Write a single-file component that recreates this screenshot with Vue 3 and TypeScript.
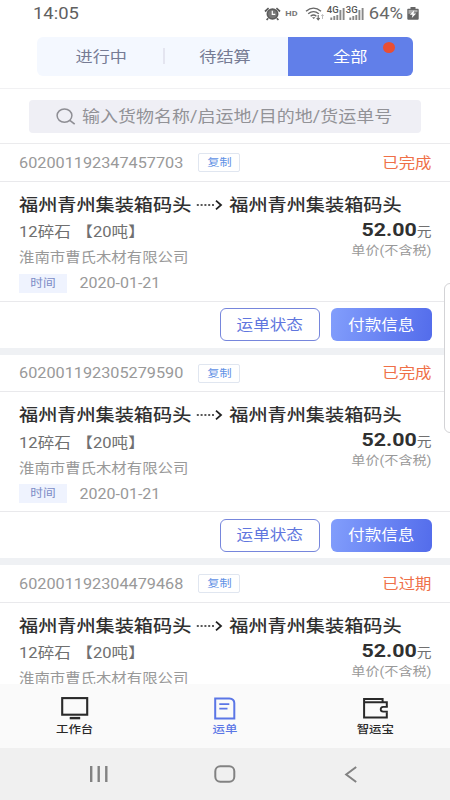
<script setup lang="ts">
interface Waybill {
  no: string
  status: string
}

const place = '福州青州集装箱码头'
const waybills: Waybill[] = [
  { no: '602001192347457703', status: '已完成' },
  { no: '602001192305279590', status: '已完成' },
  { no: '602001192304479468', status: '已过期' },
]
</script>

<template>
  <div class="screen">
    <header class="status">
      <span class="t clock">14:05</span>
      <div class="signals">
        <svg class="alarm" width="17" height="14" viewBox="0 0 17 14">
          <path d="M1 4.5 4.6 1.2M16 4.5 12.4 1.2M4.2 11.2 2.6 13M12.8 11.2l1.6 1.8" stroke="#5c5c5c" stroke-width="1.7" fill="none" />
          <ellipse cx="8.5" cy="7" rx="5.2" ry="4.9" fill="#777" stroke="#5c5c5c" stroke-width="1.6" />
          <path d="M8.3 3.8v3.6h3" stroke="#fff" stroke-width="1.2" fill="none" />
        </svg>
        <span class="t hd">HD</span>
        <svg class="wifi" width="20" height="14" viewBox="0 0 20 14">
          <g fill="none" stroke="#666" stroke-width="1.4">
            <path d="M1 4.2Q8.5-2 16 4.2" />
            <path d="M3.2 6.8Q8.5 2.5 13.8 6.8" />
            <path d="M5.6 9.2Q8.5 6.9 11.4 9.2" />
          </g>
          <path d="M7 10.2h3.4L8.7 12z" fill="#666" />
          <path d="M13.2 8v4.6M11.7 11l1.5 1.8 1.5-1.8" stroke="#666" stroke-width="1.1" fill="none" />
          <path d="M17.5 12V7.6M16.3 9l1.2-1.4L18.7 9" stroke="#bbb" fill="none" />
        </svg>
        <div v-for="net in ['4G', '3G']" :key="net" class="cell">
          <span class="t">{{ net }}</span>
          <svg width="16" height="12" viewBox="0 0 16 12">
            <path d="M1.3 9.5V12M4.3 8v4M7.3 7v5M10.4 2v10M13.6 0v12" stroke="#888" stroke-width="1.9" />
          </svg>
        </div>
        <span class="t percent">64%</span>
        <svg class="battery" width="12" height="13" viewBox="0 0 12 13">
          <path d="M3.5 0h5v1.7H11q.7 0 .7.8v9.3q0 1-1 1H1.3q-1 0-1-1V2.5q0-.8.7-.8h2.5z" fill="#666" />
          <path d="M1.5 3h9v2l-9 2z" fill="#aaa" />
          <path d="M7.2 3.2 2.8 7.8h2.7l-.7 3.3 4.4-4.7H6.5z" fill="#fff" />
        </svg>
      </div>
    </header>

    <div class="tabbar">
      <div class="tabs">
        <div class="tab"><span class="t">进行中</span></div>
        <div class="tab divided"><span class="t">待结算</span></div>
        <div class="tab active"><span class="t">全部</span><i class="dot"></i></div>
      </div>
    </div>

    <div class="searchbar">
      <div class="search">
        <svg width="20" height="17" viewBox="0 0 20 17">
          <ellipse cx="8.5" cy="7.6" rx="7.4" ry="6.7" fill="none" stroke="#8e8e94" stroke-width="1.5" />
          <path d="M13.8 12.3 18.7 16.2" stroke="#8e8e94" stroke-width="1.6" />
        </svg>
        <span class="t">输入货物名称/启运地/目的地/货运单号</span>
      </div>
    </div>

    <main class="list">
      <article v-for="bill in waybills" :key="bill.no" class="card">
        <div class="head">
          <span class="t no">{{ bill.no }}</span>
          <span class="copy"><span class="t">复制</span></span>
          <span class="t state">{{ bill.status }}</span>
        </div>
        <div class="body">
          <div class="route">
            <span class="t">{{ place }}</span>
            <svg width="27" height="12" viewBox="0 0 27 12">
              <path d="M.8 6H19" stroke="#222" stroke-width="1.5" stroke-dasharray="2 1.8" />
              <path d="M20 1.6 25 6 20 10.4" stroke="#222" stroke-width="1.8" fill="none" />
            </svg>
            <span class="t">{{ place }}</span>
          </div>
          <div class="detail">
            <div class="info">
              <div class="goods"><span class="t">12碎石</span><span class="t">【20吨】</span></div>
              <div class="company"><span class="t">淮南市曹氏木材有限公司</span></div>
              <div class="time">
                <span class="tag"><span class="t">时间</span></span>
                <span class="t">2020-01-21</span>
              </div>
            </div>
            <div class="cost">
              <div class="price"><span class="t"><b>52.00</b>元</span></div>
              <div class="unit"><span class="t">单价(不含税)</span></div>
            </div>
          </div>
        </div>
        <div class="actions">
          <button class="btn outline"><span class="t">运单状态</span></button>
          <button class="btn solid"><span class="t">付款信息</span></button>
        </div>
      </article>
    </main>

    <div class="edge-panel"></div>

    <nav class="nav">
      <div class="item">
        <svg width="28" height="23" viewBox="0 0 28 23">
          <rect x="1.2" y="1.1" width="25" height="16.6" fill="none" stroke="#292929" stroke-width="2.1" />
          <path d="M8.7 21.1h10.5" stroke="#292929" stroke-width="2.4" />
        </svg>
        <span class="t">工作台</span>
      </div>
      <div class="item current">
        <svg width="22" height="23" viewBox="0 0 22 23">
          <path d="M1.2 1.4H15.3Q20.3 1.8 20.3 6V21.5H1.2z" fill="none" stroke="#5b76e6" stroke-width="2" />
          <path d="M5.3 7.2h10M5.3 11.7h8.2" stroke="#5b76e6" stroke-width="1.7" />
        </svg>
        <span class="t">运单</span>
      </div>
      <div class="item">
        <svg width="27" height="23" viewBox="0 0 27 23">
          <path d="M24.8 9.4V5.3H2.1V2H20.6V5M2.1 4V20.6H24.8V15.2" fill="none" stroke="#292929" stroke-width="2" />
          <path d="M25.8 9.8H21.2Q18.7 9.9 18.7 12.2T21.2 14.6H25.8" fill="none" stroke="#292929" stroke-width="1.8" />
        </svg>
        <span class="t">智运宝</span>
      </div>
    </nav>

    <footer class="system">
      <svg width="20" height="16" viewBox="0 0 20 16">
        <path d="M2.2 0v16M9.7 0v16M17.3 0v16" stroke="#828282" stroke-width="2.4" />
      </svg>
      <svg width="22" height="18" viewBox="0 0 22 18">
        <rect x="1.3" y="1.2" width="19" height="15.5" rx="5" fill="none" stroke="#828282" stroke-width="2" />
      </svg>
      <svg width="14" height="17" viewBox="0 0 14 17">
        <path d="M12.2 1 2.2 8.5l10 7.5" fill="none" stroke="#828282" stroke-width="2" />
      </svg>
    </footer>
  </div>
</template>

<style>
body {
  margin: 0;
  background: #fff;
}
</style>

<style scoped>
.screen {
  position: relative;
  display: flex;
  flex-direction: column;
  width: 450px;
  height: 800px;
  overflow: hidden;
  background: #fff;
  color: #666;
  font-family: Roboto, "Noto Sans CJK SC", sans-serif;
}
.screen * {
  box-sizing: border-box;
}
svg {
  display: block;
  flex: none;
}
/* Slightly flattened lettering used by every label */
.t {
  display: inline-block;
  transform: scaleY(0.87);
  white-space: nowrap;
  line-height: 1;
}
.status {
  display: flex;
  flex: none;
  justify-content: space-between;
  height: 28px;
  padding: 0 31px 0 33px;
}
.clock {
  line-height: 28px;
  font-size: 18.4px;
  color: #606060;
}
.signals {
  display: flex;
  align-items: center;
  height: 27px;
}
.alarm {
  margin-right: 4px;
}
.hd {
  width: 14px;
  font-size: 9px;
  font-weight: 700;
  color: #777;
}
.wifi {
  margin: 0 1.5px 0 6px;
}
.cell {
  position: relative;
  display: flex;
  align-items: flex-end;
  width: 19px;
  height: 13px;
  padding-left: 3px;
}
.cell .t {
  position: absolute;
  left: 0;
  top: -2px;
  z-index: 1;
  font-size: 9.5px;
  font-weight: 500;
  color: #555;
  text-shadow: 0 0 1px #fff, 0 0 1px #fff;
}
.percent {
  margin-left: 4px;
  padding-top: 2px;
  font-size: 18.4px;
  color: #686868;
}
.battery {
  margin-left: 4px;
}
.tabbar {
  flex: none;
  height: 60.5px;
  padding: 9px 37px 0;
  border-bottom: 1.5px solid #f1f1f3;
}
.tabs {
  display: grid;
  grid-template-columns: 125.5px 125px 125.5px;
  height: 39px;
  border-radius: 6px;
  background: #f4f8ff;
  overflow: hidden;
}
.tab {
  position: relative;
  display: flex;
  align-items: center;
  justify-content: center;
  padding-top: 2px;
  font-size: 17.2px;
  color: #767b94;
}
.tab:first-child {
  padding-left: 3px;
}
.divided::before {
  content: "";
  position: absolute;
  left: 0;
  top: 11px;
  width: 2px;
  height: 16px;
  background: #e4e5f0;
}
.active {
  background: #617fe9;
  color: #fff;
}
.dot {
  position: absolute;
  right: 18px;
  top: 5px;
  width: 12px;
  height: 11px;
  border-radius: 50%;
  background: #e94e34;
}
.searchbar {
  flex: none;
  height: 55.5px;
  padding: 11px 29px 0;
  border-bottom: 1.5px solid #ebebed;
}
.search {
  display: flex;
  align-items: center;
  gap: 6px;
  height: 33px;
  padding-left: 27px;
  border-radius: 4px;
  background: #efeff5;
  font-size: 18px;
  color: #929297;
}
.search .t {
  padding-top: 2px;
}
.list {
  flex: 1;
  min-height: 0;
  overflow: hidden;
}
.card {
  height: 210.5px;
  border-bottom: 7px solid #eff1f4;
}
.head {
  display: flex;
  align-items: center;
  height: 37.5px;
  padding: 1px 18.5px 0 19px;
  border-bottom: 1.5px solid #e9e9ec;
}
.no {
  padding-top: 2px;
  font-size: 16.25px;
  color: #999;
}
.copy {
  display: flex;
  align-items: center;
  justify-content: center;
  width: 42px;
  height: 19px;
  margin-left: 15px;
  padding-top: 1px;
  border: 1px solid #e0e6f0;
  border-radius: 2px;
  font-size: 12.2px;
  color: #5f91e5;
}
.state {
  margin-left: auto;
  padding-top: 2px;
  font-size: 16.4px;
  color: #ef7048;
}
.body {
  height: 120px;
  padding: 12px 18.5px 0 19px;
  border-bottom: 1.5px solid #e9e9ec;
}
.route {
  display: flex;
  align-items: center;
  height: 24px;
  font-size: 19.15px;
  font-weight: 500;
  color: #303030;
}
.route svg {
  margin: 0 6px 0 5px;
  transform: translateY(-1px);
}
.detail {
  display: flex;
  justify-content: space-between;
}
.goods,
.company,
.time,
.price,
.unit {
  display: flex;
  align-items: center;
}
.goods {
  gap: 5.5px;
  height: 32px;
  font-size: 16.6px;
  color: #707070;
}
.company {
  height: 19px;
  font-size: 15.4px;
  color: #999;
}
.time {
  gap: 12.5px;
  height: 29px;
  font-size: 16px;
  color: #999;
}
.time > .t {
  padding-top: 2px;
}
.tag {
  display: flex;
  align-items: center;
  justify-content: center;
  width: 48px;
  height: 19px;
  background: #eff3fe;
  font-size: 12.7px;
  color: #7c8cc6;
}
.cost {
  display: flex;
  flex-direction: column;
  align-items: flex-end;
}
.price {
  height: 24px;
  font-size: 14.8px;
  color: #707070;
}
.price b {
  font-size: 21.4px;
  color: #303030;
}
.unit {
  height: 19px;
  font-size: 14.1px;
  color: #999;
}
.actions {
  display: flex;
  align-items: center;
  justify-content: flex-end;
  gap: 11px;
  height: 46px;
  padding-right: 18.5px;
}
.btn {
  display: flex;
  align-items: center;
  justify-content: center;
  width: 100.5px;
  height: 33px;
  padding: 3px 0 0;
  border: 0;
  border-radius: 6px;
  font-family: inherit;
  font-size: 16.6px;
}
.outline {
  border: 1.5px solid #7686dc;
  background: #fff;
  color: #6076de;
}
.solid {
  background: linear-gradient(100deg, #829efc, #536ceb);
  color: #fff;
}
.edge-panel {
  position: absolute;
  right: -8px;
  top: 283px;
  width: 14px;
  height: 150px;
  border: 1.5px solid #d3d3d6;
  border-radius: 6px;
  background: #fff;
}
.nav {
  display: flex;
  flex: none;
  height: 64px;
  background: #fafafa;
}
.item {
  flex: 1;
  display: flex;
  flex-direction: column;
  align-items: center;
  padding-top: 13px;
  font-size: 12.4px;
  font-weight: 500;
  color: #292929;
}
.item svg {
  height: 23px;
}
.item:last-child {
  padding-left: 1px;
}
.item .t {
  margin-top: 3px;
}
.item.current {
  padding-left: 1px;
  color: #5b76e6;
}
.system {
  display: grid;
  grid-template-columns: 198px 54px 198px;
  align-items: center;
  justify-items: center;
  flex: none;
  height: 52px;
  background: #f0f0f0;
}
</style>
